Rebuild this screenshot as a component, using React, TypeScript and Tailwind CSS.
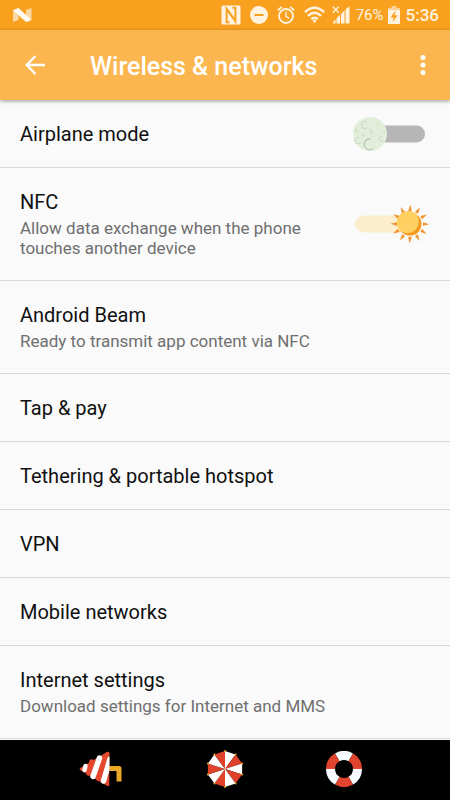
import React, { useState } from 'react';

interface SettingItem {
  id: string;
  title: string;
  summary?: string;
}

const links: SettingItem[] = [
  { id: 'beam', title: 'Android Beam', summary: 'Ready to transmit app content via NFC' },
  { id: 'tap', title: 'Tap & pay' },
  { id: 'tether', title: 'Tethering & portable hotspot' },
  { id: 'vpn', title: 'VPN' },
  { id: 'mobile', title: 'Mobile networks' },
  { id: 'internet', title: 'Internet settings', summary: 'Download settings for Internet and MMS' },
];

// Point on a circle, angle in degrees clockwise from the top
const polar = (cx: number, cy: number, r: number, deg: number) => {
  const a = (deg * Math.PI) / 180;
  return `${(cx + r * Math.sin(a)).toFixed(2)} ${(cy - r * Math.cos(a)).toFixed(2)}`;
};

const StatusBar = () => (
  <div className="flex h-[30px] shrink-0 items-center bg-[#f9a11f] pr-[11px] pl-[13px] text-[#fff3e0]">
    <svg width="19" height="14" viewBox="0 0 19 14" aria-hidden="true">
      <path d="M0 2.200 5.500 0v12L0 14zM13 2l5.500-2v12L13 14z" fill="#fdd9a3" />
      <path d="M0 2.200 5.500 0 18.500 12 13 14z" fill="#fffaf2" />
    </svg>
    <div className="ml-auto flex items-center gap-[9px]">
      {/* NFC */}
      <svg width="20" height="20" viewBox="0 0 20 20" aria-hidden="true">
        <rect x="0.5" y="0.5" width="19" height="19" rx="1.5" fill="currentColor" />
        <path d="M8.500 17.200H5.600V3.600L14.400 15.800M11.500 2.800h2.900V16.400L5.600 4.200" fill="none" stroke="#f9a11f" strokeWidth="1.900" />
      </svg>
      {/* Do not disturb */}
      <svg width="18" height="18" viewBox="0 0 18 18" aria-hidden="true">
        <circle cx="9" cy="9" r="9" fill="currentColor" />
        <path d="M4.500 9h9" stroke="#f9a11f" strokeWidth="2" />
      </svg>
      {/* Alarm */}
      <svg width="18" height="18" viewBox="0 0 18 18" fill="none" stroke="currentColor" strokeWidth="1.800" aria-hidden="true">
        <circle cx="9" cy="10" r="7" />
        <path d="M.8 4.200 4.800.9M17.200 4.200 13.200.9" />
        <path d="M9 5.800v4.600l3.200 2" strokeWidth="1.400" />
      </svg>
      <div className="flex items-center gap-[7px]">
        {/* Wi-Fi */}
        <svg width="21" height="18" viewBox="0 0 21 18" fill="none" stroke="currentColor" strokeWidth="2.400" aria-hidden="true">
          <path d="M.8 6.200Q10.500-2.800 20.200 6.200" />
          <path d="M4 9.800q6.500-6 13 0" />
          <path d="M7.200 13.100q3.300-2.900 6.600 0" />
          <path d="M8.300 14.600q2.200-1.700 4.400 0L10.500 17z" fill="currentColor" stroke="none" />
        </svg>
        {/* Signal */}
        <svg width="18" height="18" viewBox="0 0 18 18" fill="currentColor" aria-hidden="true">
          <path d="M1 17.500v-1.500l2.500-2.500v4zM4.500 17.500v-5.200l3.500-3.500v8.700zM9 17.500V8l3.500-3.500v13zM13.500 17.500V3.600L17.500.2v17.300z" />
          <path d="m.8.800 6 6M6.800.8l-6 6" stroke="currentColor" strokeWidth="1.300" />
        </svg>
      </div>
    </div>
    <span className="ml-[6px] text-[15px] leading-5">76%</span>
    <svg className="ml-[4px]" width="12" height="18" viewBox="0 0 12 18" aria-hidden="true">
      <path d="M3.500 0h5v2H12v4H0V2h3.500z" fill="#fdd095" />
      <path d="M0 4h12v14H0z" fill="currentColor" />
      <path d="M7.600 4.200 2.600 11.400h3L4.600 16.200l5-7h-3z" fill="#f9a11f" />
    </svg>
    <span className="ml-[6px] text-[17px] leading-5 font-medium">5:36</span>
  </div>
);

const MoonKnob = () => (
  <g>
    <circle cx="20" cy="20" r="17" fill="#e2eeda" />
    <g fill="none" stroke="#bccfbb" strokeWidth="0.8">
      <path d="M16 7.500a3.600 3.600 0 1 0 1.500 6.200" />
      <path d="M20.500 25a5.400 5.400 0 1 0 2.500 9.600" stroke="#aec3b0" strokeWidth="1.100" />
      <path d="M9 23.500a3.200 3.200 0 1 0 1.500 5.400" />
      <path d="M6.500 14a2 2 0 1 0 2.500 3" />
      <path d="M21.500 15a2 2 0 1 0 2 3.200" />
      <path d="M32 23a2.200 2.200 0 1 0 1.500 3.200" />
      <path d="M13.500 19.500a1.200 1.200 0 1 0 1 2" />
      <path d="M27 10.500q.5 1.500 2 1.500M33 17q1 2 2 1" />
    </g>
  </g>
);

const SunKnob = () => (
  <g>
    {Array.from({ length: 12 }, (_, i) => (
      <path
        key={i}
        d={`M${polar(60, 20, 19.5, i * 30 + 1)}L${polar(60, 20, 13, i * 30 - 8)}L${polar(60, 20, 13, i * 30 + 8)}Z`}
        fill="#f0932b"
      />
    ))}
    <circle cx="60" cy="20" r="11.500" fill="#f39a1f" />
    <path d="M67 11A11.500 11.500 0 1 0 51.500 27.800 11.800 11.800 0 0 0 67 11z" fill="#ffd061" />
  </g>
);

const RowText: React.FC<{ title: string; summary?: string }> = ({ title, summary }) => (
  <span className="block flex-1 pt-[22px] pb-5">
    <span className="block text-[20px] leading-[25px] text-[#101010]">{title}</span>
    {summary && <span className="block pt-[3px] pb-[2px] text-[17px] leading-5 text-[#6f6f6f]">{summary}</span>}
  </span>
);

interface ToggleRowProps extends SettingItem {
  defaultOn?: boolean;
}

const ToggleRow: React.FC<ToggleRowProps> = ({ id, title, summary, defaultOn = false }) => {
  const [on, setOn] = useState<boolean>(defaultOn);

  return (
    <li className="border-b border-[#d8d8d8]">
      <label htmlFor={id} className="flex cursor-pointer items-center px-5">
        <RowText title={title} summary={summary} />
        <span className="relative h-10 w-20 shrink-0">
          <input
            id={id}
            type="checkbox"
            role="switch"
            checked={on}
            onChange={(e) => setOn(e.target.checked)}
            className="absolute inset-0 size-full cursor-pointer opacity-0"
          />
          <svg className="pointer-events-none" width="80" height="40" viewBox="0 0 80 40" aria-hidden="true">
            <rect x="5" y="11.500" width={on ? 55 : 70} height="17" rx="8.500" fill={on ? '#fcedcd' : '#b6b6b6'} />
            {on ? <SunKnob /> : <MoonKnob />}
          </svg>
        </span>
      </label>
    </li>
  );
};

const LinkRow: React.FC<SettingItem> = ({ id, title, summary }) => (
  <li className="border-b border-[#d8d8d8]">
    <a href={`#${id}`} className="block px-5">
      <RowText title={title} summary={summary} />
    </a>
  </li>
);

const ConeIcon = () => (
  <svg width="44" height="36" viewBox="0 0 44 36" aria-hidden="true">
    <path d="M29 17.500h11v13" fill="none" stroke="#eaa827" strokeWidth="5" strokeLinejoin="round" />
    <clipPath id="cone">
      <path d="M0 0h30.500v36H0z" />
    </clipPath>
    <g clipPath="url(#cone)" strokeLinecap="round">
      <path d="M.5 17.800Q1 16.500 3 16L27.500 1.300Q30.500 0 30.500 2.500v31Q30.500 36 28 34.800L3 20Q1 19.500.5 17.800z" fill="#e5472d" />
      <path d="M12.500 10.500 9.500 22.500M28.500 3 19.500 28" stroke="#e5472d" strokeWidth="4.500" />
      <path d="M6.500 15 5.500 19" stroke="#fff" strokeWidth="4.500" />
      <path d="M20.500 7 14 25.500M31 8 24.500 30" stroke="#fff" strokeWidth="5.500" />
    </g>
  </svg>
);

const UmbrellaIcon = () => (
  <svg width="38" height="38" viewBox="0 0 38 38" aria-hidden="true">
    {Array.from({ length: 10 }, (_, i) => (
      <path
        key={i}
        d={`M19 19L${polar(19, 19, 18, i * 36)}L${polar(19, 19, 18, i * 36 + 36)}Z`}
        fill={i % 2 ? '#e0412b' : '#fff'}
      />
    ))}
    {Array.from({ length: 10 }, (_, i) => (
      <path key={i} d={`M${polar(19, 19, 18, i * 36)}h.01`} stroke="#eaa827" strokeWidth="2" strokeLinecap="round" />
    ))}
    <circle cx="19" cy="19" r="1" fill="#f0b090" />
  </svg>
);

const LifebuoyIcon = () => (
  <svg width="36" height="36" viewBox="0 0 36 36" aria-hidden="true">
    {Array.from({ length: 6 }, (_, i) => {
      const from = i * 60 - 30;
      return (
        <path
          key={i}
          d={`M${polar(18, 18, 18, from)}A18 18 0 0 1 ${polar(18, 18, 18, from + 60)}L${polar(18, 18, 9, from + 60)}A9 9 0 0 0 ${polar(18, 18, 9, from)}Z`}
          fill={i % 2 ? '#e0442f' : '#f8fcff'}
        />
      );
    })}
  </svg>
);

const App: React.FC = () => (
  <div className="flex h-screen flex-col bg-[#fafafa] font-[Roboto,sans-serif]">
    <StatusBar />

    <header className="z-10 flex h-[70px] shrink-0 items-center bg-[#fcb64f] px-[10px] text-white shadow-[0_1px_4px_rgba(0,0,0,0.4)]">
      <button type="button" aria-label="Back" className="flex size-[50px] items-center justify-center">
        <svg width="20" height="20" viewBox="0 0 20 20" fill="none" stroke="currentColor" strokeWidth="2.300" aria-hidden="true">
          <path d="M20 10H2M10.500 1 1.600 10l8.900 9" />
        </svg>
      </button>
      <h1 className="flex-1 pt-[3px] pl-[30px] text-[25px] leading-8 font-medium">Wireless &amp; networks</h1>
      <button type="button" aria-label="More options" className="flex h-[50px] w-[35px] items-center justify-center">
        <svg width="6" height="20" viewBox="0 0 6 20" fill="currentColor" aria-hidden="true">
          <circle cx="3" cy="2.500" r="2.500" />
          <circle cx="3" cy="10" r="2.500" />
          <circle cx="3" cy="17.500" r="2.500" />
        </svg>
      </button>
    </header>

    <main className="min-h-0 flex-1 overflow-hidden">
      <ul>
        <ToggleRow id="airplane" title="Airplane mode" />
        <ToggleRow
          id="nfc"
          title="NFC"
          summary="Allow data exchange when the phone touches another device"
          defaultOn
        />
        {links.map((item) => (
          <LinkRow key={item.id} {...item} />
        ))}
      </ul>
    </main>

    {/* Navigation bar */}
    <nav className="flex h-[60px] shrink-0 items-center justify-between bg-black pr-[88px] pb-[2px] pl-[79px]">
      <button type="button" aria-label="Back">
        <ConeIcon />
      </button>
      <button type="button" aria-label="Home">
        <UmbrellaIcon />
      </button>
      <button type="button" aria-label="Recent apps">
        <LifebuoyIcon />
      </button>
    </nav>
  </div>
);

export default App;
